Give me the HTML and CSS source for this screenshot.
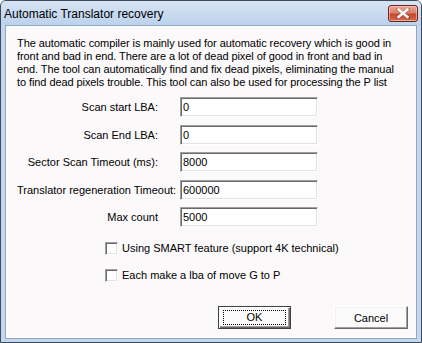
FILE: index.html
```html
<!DOCTYPE html>
<html lang="en">
<head>
    <meta charset="UTF-8">
    <title>Automatic Translator recovery</title>
    <link rel="stylesheet" href="styles.css">
</head>
<body>
    <div class="window">
        <div class="titlebar">
            <span class="title">Automatic Translator recovery</span>
            <button class="close-btn" title="Close">
                <svg width="14" height="11" viewBox="0 0 14 11">
                    <path d="M2 1.5 L12 9.5 M12 1.5 L2 9.5" stroke="#5a1a10" stroke-width="3.4" stroke-linecap="square" opacity="0.45"/>
                    <path d="M2.5 1.5 L11.5 9 M11.5 1.5 L2.5 9" stroke="#fff" stroke-width="2.4" stroke-linecap="square"/>
                </svg>
            </button>
        </div>

        <div class="content">
            <p class="intro">The automatic compiler is mainly used for automatic recovery which is good in<br>front and bad in end. There are a lot of dead pixel of good in front and bad in<br>end. The tool can automatically find and fix dead pixels, eliminating the manual<br>to find dead pixels trouble. This tool can also be used for processing the P list</p>

            <div class="form-grid">
                <label class="field-label">Scan start LBA:</label>
                <input class="field" type="text" value="0">

                <label class="field-label">Scan End LBA:</label>
                <input class="field" type="text" value="0">

                <label class="field-label">Sector Scan Timeout (ms):</label>
                <input class="field" type="text" value="8000">

                <label class="field-label">Translator regeneration Timeout:</label>
                <input class="field" type="text" value="600000">

                <label class="field-label">Max count</label>
                <input class="field" type="text" value="5000">
            </div>

            <div class="options">
                <label class="check"><span class="check-box"></span>Using SMART feature (support 4K technical)</label>
                <label class="check"><span class="check-box"></span>Each make a lba of move G to P</label>
            </div>

            <div class="buttons">
                <button class="btn btn-default"><span class="focus-rect">OK</span></button>
                <button class="btn">Cancel</button>
            </div>
        </div>
    </div>
</body>
</html>
```

FILE: styles.css
```css
html, body {
    margin: 0;
    padding: 0;
    background: #ffffff;
}

body {
    font-family: "Liberation Sans", Arial, sans-serif;
    font-size: 11px;
    color: #000;
}

.window {
    box-sizing: border-box;
    width: 422px;
    height: 343px;
    border: 1px solid #3d4a5a;
    border-radius: 6px 6px 0 0;
    background: #c4d7ee;
    padding: 0 4px 3px 4px;
    display: flex;
    flex-direction: column;
}

.titlebar {
    height: 24px;
    display: flex;
    align-items: center;
    justify-content: space-between;
    background: linear-gradient(#d6e4f5, #bcd2ec);
    margin: 0 -4px;
    padding: 0 3px 0 3px;
    border-radius: 5px 5px 0 0;
}

.title {
    font-size: 12px;
    color: #000;
    margin-top: 2px;
}

.close-btn {
    width: 30px;
    height: 17px;
    margin-top: 1px;
    padding: 0;
    border: 1px solid #6b2418;
    border-radius: 3px;
    background: linear-gradient(#e8a594 0%, #d9826c 45%, #c4462d 55%, #d46a4f 100%);
    box-shadow: inset 0 0 0 1px rgba(255, 210, 200, 0.6);
    display: flex;
    align-items: center;
    justify-content: center;
}

.content {
    flex: 1;
    background: #fbf9fa;
    border: 1px solid #92a9c4;
    padding: 11px 8px 0 11px;
    display: flex;
    flex-direction: column;
}

.intro {
    margin: 0;
    line-height: 13px;
    letter-spacing: -0.08px;
    white-space: nowrap;
}

.form-grid {
    display: grid;
    grid-template-columns: 141px 138px;
    column-gap: 22px;
    row-gap: 7.5px;
    margin-top: 8px;
}

.field-label {
    text-align: right;
    white-space: nowrap;
    line-height: 20px;
    height: 20px;
}

.field {
    box-sizing: border-box;
    width: 138px;
    height: 20px;
    margin: 0;
    padding: 0 2px;
    font-family: inherit;
    font-size: 11px;
    color: #000;
    background: #fff;
    border-style: solid;
    border-width: 1px;
    border-color: #a0a0a0 #ffffff #ffffff #a0a0a0;
    box-shadow: inset 1px 1px 0 #696969, inset -1px -1px 0 #e3e3e3;
    outline: none;
}

.options {
    display: flex;
    flex-direction: column;
    gap: 14px;
    margin-top: 15px;
    padding-left: 88px;
}

.check {
    display: flex;
    align-items: center;
    height: 13px;
    line-height: 13px;
}

.check-box {
    box-sizing: border-box;
    width: 13px;
    height: 13px;
    margin-right: 4px;
    background: #fff;
    border-style: solid;
    border-width: 1px;
    border-color: #a0a0a0 #ffffff #ffffff #a0a0a0;
    box-shadow: inset 1px 1px 0 #696969, inset -1px -1px 0 #e3e3e3;
}

.buttons {
    display: flex;
    justify-content: flex-end;
    gap: 43px;
    margin-top: 24px;
}

.btn {
    box-sizing: border-box;
    width: 74px;
    height: 23px;
    padding: 0;
    font-family: inherit;
    font-size: 11px;
    color: #000;
    background: #fbfbfb;
    border-style: solid;
    border-width: 1px;
    border-color: #ffffff #696969 #696969 #ffffff;
    box-shadow: inset -1px -1px 0 #a0a0a0, inset 1px 1px 0 #f0f0f0;
}

.btn-default {
    width: 73px;
    border-color: #404040;
    box-shadow: inset 1px 1px 0 #fff, inset -1px -1px 0 #696969, inset -2px -2px 0 #a0a0a0;
    display: flex;
    align-items: center;
    justify-content: center;
}

.focus-rect {
    box-sizing: border-box;
    width: 63px;
    height: 15px;
    line-height: 13px;
    border: 1px dotted #000;
}
```
